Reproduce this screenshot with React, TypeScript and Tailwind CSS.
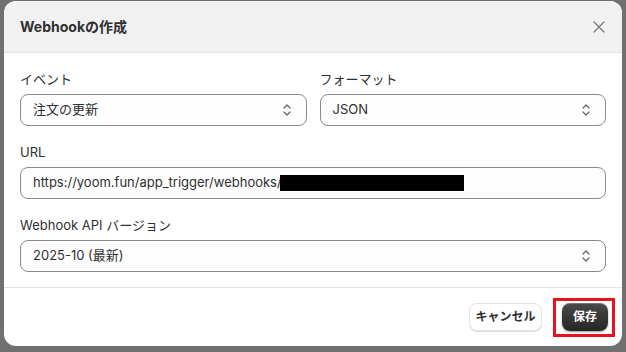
import React from "react";

const font = { fontFamily: '"Inter", "Noto Sans CJK JP", sans-serif' };

function Chevrons() {
  return (
    <svg width="10" height="14" viewBox="0 0 10 14" fill="none" stroke="#616161" strokeWidth="1.2" strokeLinecap="round" strokeLinejoin="round">
      <path d="M2 5 L5 2 L8 5" />
      <path d="M2 9 L5 12 L8 9" />
    </svg>
  );
}

function Select({ value }: { value: string }) {
  return (
    <div className="flex h-[32px] items-center justify-between rounded-[8px] border border-[#8a8a8a] bg-[#fdfdfd] pl-[12px] pr-[14px] text-[13px] text-[#303030]">
      <span>{value}</span>
      <Chevrons />
    </div>
  );
}

function Field({ label, children }: { label: string; children: React.ReactNode }) {
  return (
    <div className="flex flex-col gap-[5px]">
      <label className="h-[20px] text-[13px] leading-[20px] text-[#303030]">{label}</label>
      {children}
    </div>
  );
}

export default function App() {
  return (
    <div className="h-[352px] w-[626px] bg-[#707070] pl-[4px] pr-[4px] pt-[1px]" style={font}>
      <div className="flex h-[345px] w-[618px] flex-col overflow-hidden rounded-[12px] bg-white">
        <div className="flex h-[52px] items-center justify-between border-b border-[#e3e3e3] bg-[#f1f1f1] pl-[16px] pr-[17px]">
          <h1 className="text-[14px] font-bold text-[#303030]">Webhookの作成</h1>
          <svg width="12" height="12" viewBox="0 0 12 12" stroke="#7a7a7a" strokeWidth="1.3" strokeLinecap="round">
            <path d="M1 1 L11 11 M11 1 L1 11" />
          </svg>
        </div>

        <div className="flex flex-col gap-[16px] px-[16px] pt-[16px]">
          <div className="grid grid-cols-2 gap-[13px]">
            <Field label="イベント">
              <Select value="注文の更新" />
            </Field>
            <Field label="フォーマット">
              <Select value="JSON" />
            </Field>
          </div>
          <Field label="URL">
            <div className="flex h-[32px] items-center rounded-[8px] border border-[#8a8a8a] bg-[#fdfdfd] px-[12px] text-[13px] text-[#303030]">
              <span>https://yoom.fun/app_trigger/webhooks/</span>
              <span className="ml-[-2px] inline-block h-[16px] w-[184px] bg-black" />
            </div>
          </Field>
          <Field label="Webhook API バージョン">
            <Select value="2025-10 (最新)" />
          </Field>
        </div>

        <div className="mt-[15px] flex flex-1 items-center justify-end gap-[20px] border-t border-[#e3e3e3] pr-[14px]">
          <button className="h-[28px] w-[73px] rounded-[8px] border border-[#e3e3e3] bg-white text-[12px] font-semibold text-[#303030] shadow-[0_1px_0_rgba(0,0,0,0.12)]">
            キャンセル
          </button>
          <div className="relative">
            <button className="h-[28px] rounded-[8px] bg-gradient-to-b from-[#4a4a4a] to-[#262626] px-[11px] text-[12px] font-bold text-white shadow-[inset_0_1px_0_rgba(255,255,255,0.25),0_1px_2px_rgba(0,0,0,0.4)]">
              保存
            </button>
            <div className="pointer-events-none absolute -bottom-[6px] -left-[9px] -right-[7px] -top-[5px] border-[3px] border-[#e8141c]" />
          </div>
        </div>
      </div>
    </div>
  );
}
